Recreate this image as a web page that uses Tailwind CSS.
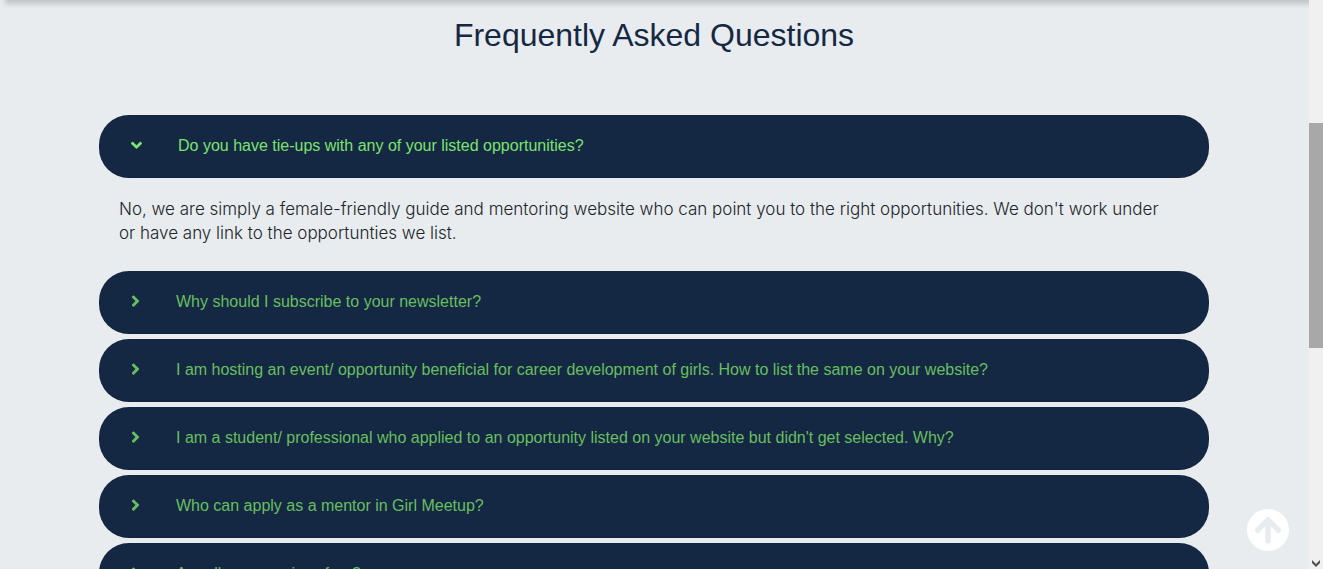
<!DOCTYPE html>
<html lang="en">
<head>
<meta charset="utf-8">
<meta name="viewport" content="width=device-width, initial-scale=1">
<title>Frequently Asked Questions</title>
<script src="https://cdn.jsdelivr.net/npm/@tailwindcss/browser@4"></script>
</head>
<body class="flex h-screen overflow-hidden bg-[#e8ecef] font-['Liberation_Sans',Arial,sans-serif]">
<svg class="hidden" aria-hidden="true">
  <symbol id="down" viewBox="0 0 320 512"><path d="M143 332.300L7 196.300c-9.400-9.400-9.400-24.600 0-33.900l22.600-22.600c9.400-9.400 24.600-9.400 33.900 0l96.400 96.400 96.400-96.400c9.400-9.400 24.600-9.400 33.900 0l22.600 22.600c9.400 9.400 9.400 24.600 0 33.900l-136 136c-9.200 9.400-24.400 9.400-33.800 0z"/></symbol>
  <symbol id="right" viewBox="0 0 256 512"><path d="M224.300 248l-136 136c-9.400 9.400-24.600 9.400-33.900 0l-22.600-22.600c-9.400-9.400-9.400-24.600 0-33.900l96.400-96.400-96.400-96.400c-9.400-9.400-9.400-24.600 0-33.900L54.300 78c9.400-9.400 24.600-9.400 33.900 0l136 136c9.500 9.400 9.500 24.600.1 34z"/></symbol>
</svg>
<div class="relative min-w-0 flex-1 overflow-hidden pr-px">
  <div class="absolute inset-x-0 -top-10 h-10 shadow-[5px_4px_5px_rgba(0,0,0,0.17)]"></div>
  <main class="mx-auto max-w-[1150px] px-5 pt-4">
    <h1 class="mb-[60px] text-center text-[32px] leading-[39px] text-[#152843]">Frequently Asked Questions</h1>
    <section class="flex flex-col gap-[5px]">
      <div>
        <button type="button" aria-expanded="true" aria-controls="answer" class="flex h-[63px] w-full items-center gap-9 rounded-[30px] bg-[#152843] px-8 pb-[2px] text-left text-base text-[#7be36c] shadow-[inset_0_-1px_1px_rgba(0,0,0,0.15)]"><svg class="h-[18px] w-[11px] shrink-0 fill-current" aria-hidden="true"><use href="#down"/></svg><span>Do you have tie-ups with any of your listed opportunities?</span></button>
        <p id="answer" class="pt-[19px] pr-8 pb-[21px] pl-5 font-[Inter,sans-serif] text-[17px] leading-6 font-light text-[#212529]">No, we are simply a female-friendly guide and mentoring website who can point you to the right opportunities. We don't work under or have any link to the opportunties we list.</p>
      </div>
      <button type="button" aria-expanded="false" class="flex h-[63px] w-full items-center gap-9 rounded-[30px] bg-[#152843] px-8 pb-[2px] text-left text-base text-[#67bf5f] shadow-[inset_0_-1px_1px_rgba(0,0,0,0.15)]"><svg class="h-[18px] w-[9px] shrink-0 fill-current" aria-hidden="true"><use href="#right"/></svg><span>Why should I subscribe to your newsletter?</span></button>
      <button type="button" aria-expanded="false" class="flex h-[63px] w-full items-center gap-9 rounded-[30px] bg-[#152843] px-8 pb-[2px] text-left text-base text-[#67bf5f] shadow-[inset_0_-1px_1px_rgba(0,0,0,0.15)]"><svg class="h-[18px] w-[9px] shrink-0 fill-current" aria-hidden="true"><use href="#right"/></svg><span>I am hosting an event/ opportunity beneficial for career development of girls. How to list the same on your website?</span></button>
      <button type="button" aria-expanded="false" class="flex h-[63px] w-full items-center gap-9 rounded-[30px] bg-[#152843] px-8 pb-[2px] text-left text-base text-[#67bf5f] shadow-[inset_0_-1px_1px_rgba(0,0,0,0.15)]"><svg class="h-[18px] w-[9px] shrink-0 fill-current" aria-hidden="true"><use href="#right"/></svg><span>I am a student/ professional who applied to an opportunity listed on your website but didn't get selected. Why?</span></button>
      <button type="button" aria-expanded="false" class="flex h-[63px] w-full items-center gap-9 rounded-[30px] bg-[#152843] px-8 pb-[2px] text-left text-base text-[#67bf5f] shadow-[inset_0_-1px_1px_rgba(0,0,0,0.15)]"><svg class="h-[18px] w-[9px] shrink-0 fill-current" aria-hidden="true"><use href="#right"/></svg><span>Who can apply as a mentor in Girl Meetup?</span></button>
      <button type="button" aria-expanded="false" class="flex h-[63px] w-full items-center gap-9 rounded-[30px] bg-[#152843] px-8 pb-[2px] text-left text-base text-[#67bf5f] shadow-[inset_0_-1px_1px_rgba(0,0,0,0.15)]"><svg class="h-[18px] w-[9px] shrink-0 fill-current" aria-hidden="true"><use href="#right"/></svg><span>Are all your services free?</span></button>
    </section>
  </main>
  <a href="#" aria-label="Back to top" class="absolute right-5 bottom-[18px] text-white"><svg viewBox="8 8 496 496" class="size-[42px] fill-current" aria-hidden="true"><path d="M8 256C8 119 119 8 256 8s248 111 248 248-111 248-248 248S8 393 8 256zm143.600 28.900l72.400-75.500V392c0 13.300 10.700 24 24 24h16c13.300 0 24-10.700 24-24V209.400l72.400 75.500c9.300 9.700 24.800 9.900 34.300.4l10.900-11c9.400-9.400 9.400-24.600 0-33.900L273 107.700c-9.400-9.400-24.600-9.400-33.900 0L106.300 240.400c-9.400 9.400-9.400 24.600 0 33.900l10.900 11c9.600 9.500 25.100 9.300 34.400-.4z"/></svg></a>
</div>
<div class="flex w-[14px] shrink-0 flex-col bg-[#f0f0f0]" aria-hidden="true">
  <div class="mt-[123px] h-[225px] bg-[#a8a8a8]"></div>
  <svg viewBox="0 0 8 7" class="mx-auto mt-auto mb-[2px] h-[7px] w-2 fill-[#505050]"><path d="M0 0L4 4L8 0V3L4 7L0 3Z"/></svg>
</div>
</body>
</html>
